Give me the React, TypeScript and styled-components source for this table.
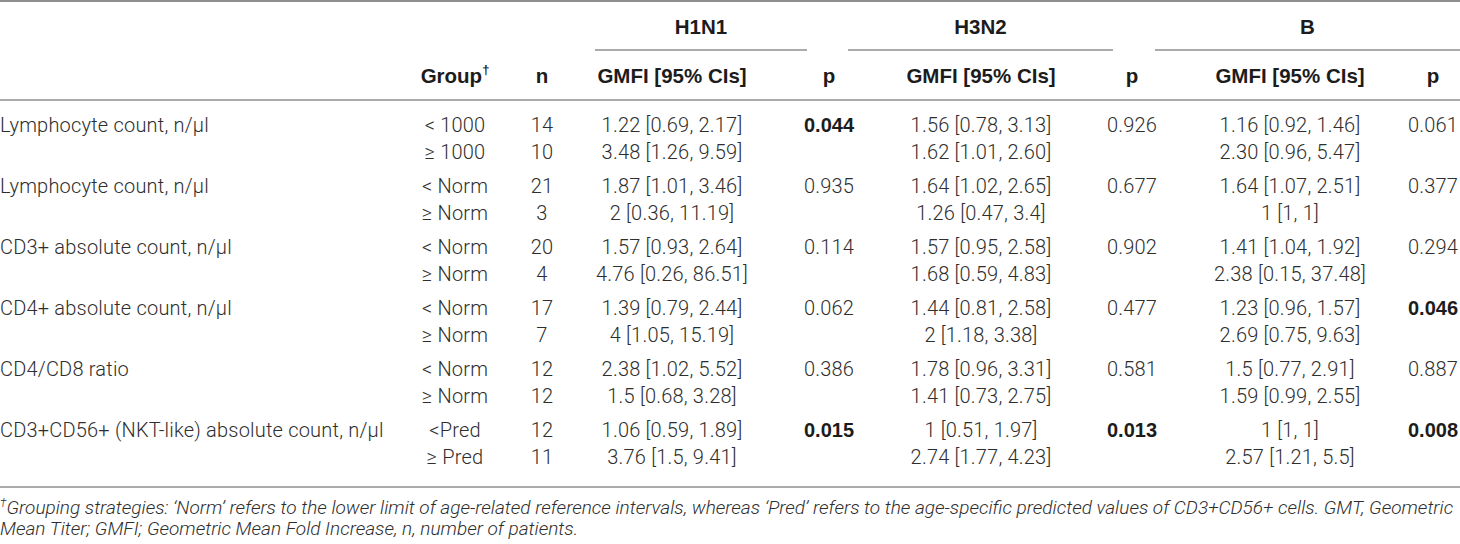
import React from "react"
import styled, { createGlobalStyle } from "styled-components"

type Row = { group: string, n: string, h1n1: string, h3n2: string, b: string }
type PValue = { value: string, bold?: boolean }
type Block = { label: string, rows: [Row, Row], p: [PValue, PValue, PValue] }

const blocks: Block[] = [
   {
      label: "Lymphocyte count, n/µl",
      rows: [
         { group: "< 1000", n: "14", h1n1: "1.22 [0.69, 2.17]", h3n2: "1.56 [0.78, 3.13]", b: "1.16 [0.92, 1.46]" },
         { group: "≥ 1000", n: "10", h1n1: "3.48 [1.26, 9.59]", h3n2: "1.62 [1.01, 2.60]", b: "2.30 [0.96, 5.47]" },
      ],
      p: [{ value: "0.044", bold: true }, { value: "0.926" }, { value: "0.061" }],
   },
   {
      label: "Lymphocyte count, n/µl",
      rows: [
         { group: "< Norm", n: "21", h1n1: "1.87 [1.01, 3.46]", h3n2: "1.64 [1.02, 2.65]", b: "1.64 [1.07, 2.51]" },
         { group: "≥ Norm", n: "3", h1n1: "2 [0.36, 11.19]", h3n2: "1.26 [0.47, 3.4]", b: "1 [1, 1]" },
      ],
      p: [{ value: "0.935" }, { value: "0.677" }, { value: "0.377" }],
   },
   {
      label: "CD3+ absolute count, n/µl",
      rows: [
         { group: "< Norm", n: "20", h1n1: "1.57 [0.93, 2.64]", h3n2: "1.57 [0.95, 2.58]", b: "1.41 [1.04, 1.92]" },
         { group: "≥ Norm", n: "4", h1n1: "4.76 [0.26, 86.51]", h3n2: "1.68 [0.59, 4.83]", b: "2.38 [0.15, 37.48]" },
      ],
      p: [{ value: "0.114" }, { value: "0.902" }, { value: "0.294" }],
   },
   {
      label: "CD4+ absolute count, n/µl",
      rows: [
         { group: "< Norm", n: "17", h1n1: "1.39 [0.79, 2.44]", h3n2: "1.44 [0.81, 2.58]", b: "1.23 [0.96, 1.57]" },
         { group: "≥ Norm", n: "7", h1n1: "4 [1.05, 15.19]", h3n2: "2 [1.18, 3.38]", b: "2.69 [0.75, 9.63]" },
      ],
      p: [{ value: "0.062" }, { value: "0.477" }, { value: "0.046", bold: true }],
   },
   {
      label: "CD4/CD8 ratio",
      rows: [
         { group: "< Norm", n: "12", h1n1: "2.38 [1.02, 5.52]", h3n2: "1.78 [0.96, 3.31]", b: "1.5 [0.77, 2.91]" },
         { group: "≥ Norm", n: "12", h1n1: "1.5 [0.68, 3.28]", h3n2: "1.41 [0.73, 2.75]", b: "1.59 [0.99, 2.55]" },
      ],
      p: [{ value: "0.386" }, { value: "0.581" }, { value: "0.887" }],
   },
   {
      label: "CD3+CD56+ (NKT-like) absolute count, n/µl",
      rows: [
         { group: "<Pred", n: "12", h1n1: "1.06 [0.59, 1.89]", h3n2: "1 [0.51, 1.97]", b: "1 [1, 1]" },
         { group: "≥ Pred", n: "11", h1n1: "3.76 [1.5, 9.41]", h3n2: "2.74 [1.77, 4.23]", b: "2.57 [1.21, 5.5]" },
      ],
      p: [{ value: "0.015", bold: true }, { value: "0.013", bold: true }, { value: "0.008", bold: true }],
   },
]

export default function App() {
   return (
      <>
         <GlobalStyle />
         <StyledTable>
            <StyledSpanRow>
               <StyledSpanHead />
               <StyledSpanHead $ruled>H1N1</StyledSpanHead>
               <StyledSpanHead />
               <StyledSpanHead $ruled>H3N2</StyledSpanHead>
               <StyledSpanHead />
               <StyledSpanHead $ruled>B</StyledSpanHead>
            </StyledSpanRow>
            <StyledHeadRow>
               <StyledHeadCell />
               <StyledHeadCell>Group<sup>†</sup></StyledHeadCell>
               <StyledHeadCell>n</StyledHeadCell>
               <StyledHeadCell>GMFI [95% CIs]</StyledHeadCell>
               <StyledHeadCell>p</StyledHeadCell>
               <StyledHeadCell>GMFI [95% CIs]</StyledHeadCell>
               <StyledHeadCell>p</StyledHeadCell>
               <StyledHeadCell>GMFI [95% CIs]</StyledHeadCell>
               <StyledHeadCell>p</StyledHeadCell>
            </StyledHeadRow>
            <StyledBody>
               {blocks.map((block, i) => (
                  <StyledBlock key={i}>
                     {block.rows.map((row, r) => (
                        <React.Fragment key={r}>
                           <StyledCell $left>{r === 0 ? block.label : ""}</StyledCell>
                           <StyledCell>{row.group}</StyledCell>
                           <StyledCell>{row.n}</StyledCell>
                           <StyledCell>{row.h1n1}</StyledCell>
                           <StyledCell $bold={block.p[0].bold}>{r === 0 ? block.p[0].value : ""}</StyledCell>
                           <StyledCell>{row.h3n2}</StyledCell>
                           <StyledCell $bold={block.p[1].bold}>{r === 0 ? block.p[1].value : ""}</StyledCell>
                           <StyledCell>{row.b}</StyledCell>
                           <StyledCell $bold={block.p[2].bold}>{r === 0 ? block.p[2].value : ""}</StyledCell>
                        </React.Fragment>
                     ))}
                  </StyledBlock>
               ))}
            </StyledBody>
         </StyledTable>
         <StyledFootnote>
            <sup>†</sup>Grouping strategies: ‘Norm’ refers to the lower limit of age-related reference intervals, whereas ‘Pred’ refers to the age-specific predicted values of CD3+CD56+ cells. GMT, Geometric
            <br />
            Mean Titer; GMFI; Geometric Mean Fold Increase, n, number of patients.
         </StyledFootnote>
      </>
   );
}

const COLUMNS = "384px 142px 32px 228px 86px 218px 84px 232px 54px"
const RULE = "#ababab"

const GlobalStyle = createGlobalStyle`
   body {
      margin: 0;
      background: #fff;
      width: 1460px;
      overflow: hidden;
      font-family: Roboto, "Liberation Sans", sans-serif;
   }
`

const StyledTable = styled.div`
   border-top: 2px solid #8e8e8e;
`

const StyledSpanRow = styled.div`
   display: grid;
   grid-template-columns: 595px 212px 41px 265px 42px 305px;
`

const StyledSpanHead = styled.div<{ $ruled?: boolean }>`
   padding: 13px 0 10px;
   line-height: 24px;
   min-height: 24px;
   text-align: center;
   font-family: "Liberation Sans", Arial, sans-serif;
   font-weight: 700;
   font-size: 20.5px;
   color: #1c1c1c;
   border-bottom: 2px solid ${({ $ruled }) => $ruled ? RULE : "transparent"};
`

const StyledHeadRow = styled.div`
   display: grid;
   grid-template-columns: ${COLUMNS};
   border-bottom: 2px solid ${RULE};
`

const StyledHeadCell = styled.div`
   padding: 13px 0 11px;
   line-height: 24px;
   text-align: center;
   white-space: nowrap;
   font-family: "Liberation Sans", Arial, sans-serif;
   font-weight: 700;
   font-size: 20.5px;
   color: #1c1c1c;

   sup {
      font-size: 13px;
      line-height: 0;
      vertical-align: 9px;
   }
`

const StyledBody = styled.div`
   display: flex;
   flex-direction: column;
   gap: 7px;
   padding: 11px 0 15px;
   border-bottom: 2px solid ${RULE};
`

const StyledBlock = styled.div`
   display: grid;
   grid-template-columns: ${COLUMNS};
   grid-auto-rows: 27px;
`

const StyledCell = styled.div<{ $left?: boolean, $bold?: boolean }>`
   line-height: 27px;
   white-space: nowrap;
   text-align: ${({ $left }) => $left ? "left" : "center"};
   font-size: 20px;
   letter-spacing: ${({ $bold }) => $bold ? "0" : "0.2px"};
   font-weight: ${({ $bold }) => $bold ? 700 : 300};
   font-family: ${({ $bold }) => $bold ? `"Liberation Sans", Arial, sans-serif` : `Roboto, "Liberation Sans", sans-serif`};
   color: ${({ $bold }) => $bold ? "#1c1c1c" : "#2e2e2e"};
`

const StyledFootnote = styled.p`
   margin: 0;
   padding-top: 9px;
   font-style: italic;
   font-weight: 300;
   font-size: 19px;
   line-height: 21px;
   white-space: nowrap;
   color: #2e2e2e;

   sup {
      font-size: 12px;
      line-height: 0;
      vertical-align: 7px;
   }
`
